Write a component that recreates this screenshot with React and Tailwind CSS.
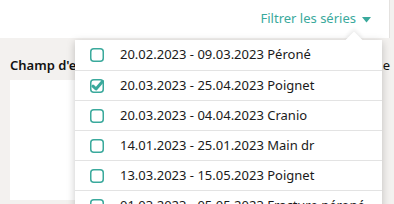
import React from "react";

const rows = [
  { t: "20.02.2023 - 09.03.2023 Péroné", c: false },
  { t: "20.03.2023 - 25.04.2023 Poignet", c: true },
  { t: "20.03.2023 - 04.04.2023 Cranio", c: false },
  { t: "14.01.2023 - 25.01.2023 Main dr", c: false },
  { t: "13.03.2023 - 15.05.2023 Poignet", c: false },
  { t: "01.03.2023 - 05.05.2023 Fracture péroné", c: false },
];

function Box({ checked }) {
  return (
    <svg width="14" height="14" viewBox="0 0 14 14" className="shrink-0">
      <rect x="0.75" y="0.75" width="12.5" height="12.5" rx="3" fill="white" stroke="#3aa99c" strokeWidth="1.5" />
      {checked && (
        <path d="M3 7.2 L6 10 L12.5 2.5" fill="none" stroke="#3aa99c" strokeWidth="3" strokeLinecap="round" strokeLinejoin="round" />
      )}
    </svg>
  );
}

export default function App() {
  return (
    <div className="relative w-[394px] h-[204px] overflow-hidden bg-[#f3f1ef]" style={{ fontFamily: "'Noto Sans', 'Open Sans', sans-serif" }}>
      <div className="h-[38px] w-[390px] bg-white border-r border-[#e4e2e0] flex items-center justify-end pr-[18px]">
        <span className="text-[13px] text-[#3aa99c]">Filtrer les séries</span>
        <svg width="9" height="6" viewBox="0 0 9 6" className="ml-[6px] mt-[2px]">
          <path d="M0 0 L9 0 L4.5 5.5 Z" fill="#3aa99c" />
        </svg>
      </div>
      <div className="pt-[18px] pl-[10px] flex justify-between pr-[4px]">
        <span className="text-[13px] font-semibold text-[#111]">Champ d'e</span>
        <span className="text-[13px] text-[#111]">e</span>
      </div>
      <div className="ml-[10px] mr-[14px] mt-[4px] h-[120px] bg-white" />

      <div className="absolute left-[75px] top-[40px] w-[307px] bg-white shadow-[0_2px_8px_rgba(0,0,0,0.22)]">
        <div className="absolute -top-[6px] right-[22px] w-[12px] h-[12px] bg-white rotate-45 shadow-[-2px_-2px_4px_rgba(0,0,0,0.08)]" />
        <div className="relative bg-white">
          {rows.map((r, i) => (
            <div key={i} className={`h-[30px] flex items-center pl-[15px] ${i > 0 ? "border-t border-[#e3e3e3]" : ""}`}>
              <Box checked={r.c} />
              <span className="ml-[16px] text-[13px] text-[#1a1a1a] whitespace-nowrap">{r.t}</span>
            </div>
          ))}
        </div>
      </div>
    </div>
  );
}
